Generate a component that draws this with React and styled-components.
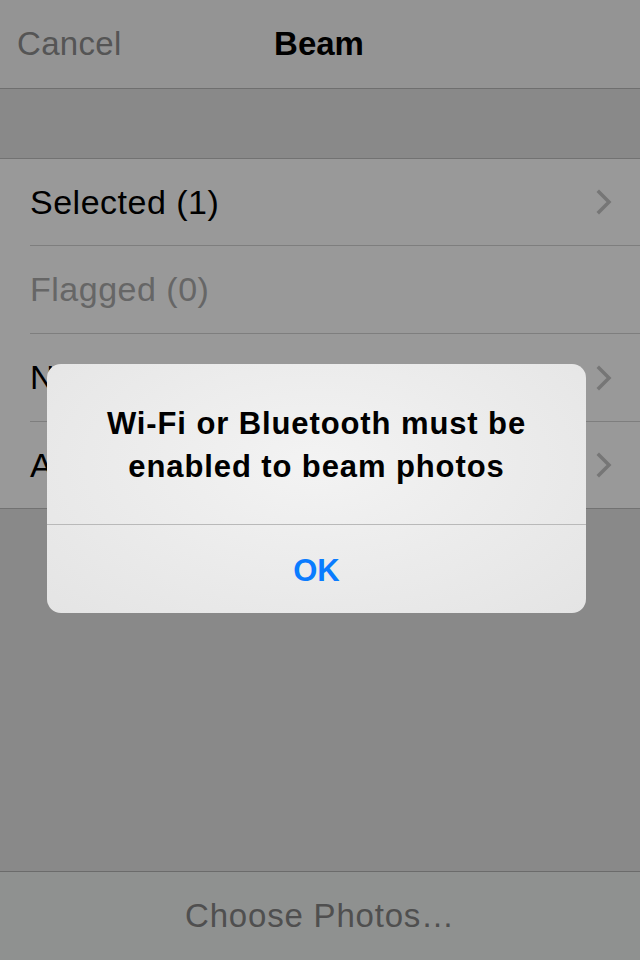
import React from 'react';
import styled, { createGlobalStyle } from 'styled-components';

const GlobalStyle = createGlobalStyle`
  html, body {
    margin: 0;
    padding: 0;
    background: #898989;
  }
  body {
    font-family: "Liberation Sans", Arial, sans-serif;
    -webkit-font-smoothing: antialiased;
  }
`;

const Screen = styled.div`
  position: relative;
  width: 640px;
  height: 960px;
  display: flex;
  flex-direction: column;
  background: #898989;
  overflow: hidden;
`;

const NavBar = styled.div`
  height: 89px;
  display: grid;
  grid-template-columns: 1fr auto 1fr;
  align-items: center;
  background: #949494;
  border-bottom: 1px solid #6f6f6f;
  box-sizing: border-box;
  padding: 0 17px;
`;

const NavButton = styled.span`
  font-size: 33px;
  letter-spacing: 0.3px;
  color: #555555;
  justify-self: start;
`;

const NavTitle = styled.span`
  font-size: 33px;
  font-weight: bold;
  color: #000;
  margin-left: -2px;
`;

const Band = styled.div`
  height: 69px;
  background: #898989;
  border-bottom: 1px solid #727272;
`;

const List = styled.div`
  background: #999999;
  border-bottom: 1px solid #727272;
`;

const Row = styled.div`
  height: ${p => p.h}px;
  box-sizing: border-box;
  margin-left: 30px;
  padding-right: 28px;
  display: flex;
  align-items: center;
  justify-content: space-between;
  border-bottom: ${p => (p.last ? 'none' : '1px solid #7e7e7e')};
  font-size: 34px;
  letter-spacing: 0.5px;
  color: ${p => (p.disabled ? '#666666' : '#000')};
`;

const Chevron = () => (
  <svg width="16" height="26" viewBox="0 0 16 26">
    <path d="M3 3 L13 13 L3 23" fill="none" stroke="#767676" strokeWidth="3.5" strokeLinecap="square" />
  </svg>
);

const Spacer = styled.div`
  flex: 1;
`;

const Toolbar = styled.div`
  height: 89px;
  display: flex;
  align-items: center;
  justify-content: center;
  background: #8f9190;
  border-top: 1px solid #6b6b6b;
  box-sizing: border-box;
  font-size: 33px;
  letter-spacing: 0.8px;
  color: #4f4f4f;
`;

const Alert = styled.div`
  position: absolute;
  left: 47px;
  top: 364px;
  width: 539px;
  height: 249px;
  border-radius: 14px;
  overflow: hidden;
  background: radial-gradient(ellipse at 50% 40%, #f3f3f3 0%, #e4e4e4 100%);
  display: flex;
  flex-direction: column;
`;

const AlertBody = styled.div`
  height: 161px;
  box-sizing: border-box;
  padding-top: 38px;
  text-align: center;
  font-size: 31px;
  letter-spacing: 0.9px;
  line-height: 43px;
  font-weight: bold;
  color: #000;
  border-bottom: 1px solid #b9b9b9;
`;

const AlertButton = styled.div`
  flex: 1;
  display: flex;
  align-items: center;
  justify-content: center;
  padding-top: 3px;
  font-size: 31px;
  font-weight: bold;
  color: #0a7cff;
`;

const rows = [
  { label: 'Selected (1)', chevron: true, h: 87 },
  { label: 'Flagged (0)', disabled: true, h: 88 },
  { label: 'Not Beamed (12)', chevron: true, h: 88 },
  { label: 'All (12)', chevron: true, last: true, h: 86 },
];

export default function App() {
  return (
    <>
      <GlobalStyle />
      <Screen>
        <NavBar>
          <NavButton>Cancel</NavButton>
          <NavTitle>Beam</NavTitle>
          <span />
        </NavBar>
        <Band />
        <List>
          {rows.map(r => (
            <Row key={r.label} h={r.h} disabled={r.disabled} last={r.last}>
              <span>{r.label}</span>
              {r.chevron && <Chevron />}
            </Row>
          ))}
        </List>
        <Spacer />
        <Toolbar>Choose Photos…</Toolbar>
        <Alert>
          <AlertBody>
            Wi-Fi or Bluetooth must be
            <br />
            enabled to beam photos
          </AlertBody>
          <AlertButton>OK</AlertButton>
        </Alert>
      </Screen>
    </>
  );
}
